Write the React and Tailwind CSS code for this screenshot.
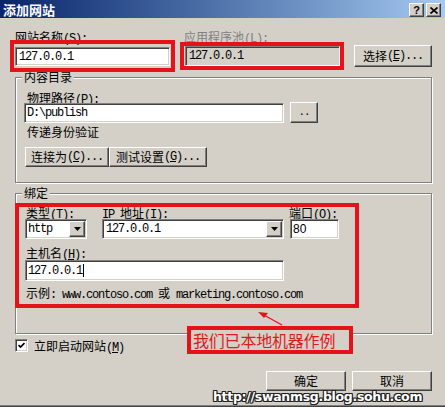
import React from "react";

const sunken =
  "border border-t-[#808080] border-l-[#808080] border-b-white border-r-white shadow-[inset_1px_1px_0_#404040,inset_-1px_-1px_0_#d4d0c8]";
const raised =
  "border border-t-white border-l-white border-b-[#404040] border-r-[#404040] shadow-[inset_-1px_-1px_0_#808080] bg-[#d4d0c8]";
const etched =
  "border border-[#808080] shadow-[1px_1px_0_#fff,inset_1px_1px_0_#fff]";
const mono = "font-['Liberation_Mono','Noto_Sans_CJK_SC',monospace] text-[12px] tracking-[-1.2px]";
const lbl = "h-[11px] leading-[11px] text-[12px] whitespace-nowrap";

function Acc({ k, colon = true, dots = false }) {
  return (
    <span className={mono}>
      (<span className="underline underline-offset-1">{k}</span>){colon ? ":" : ""}
      {dots ? "..." : ""}
    </span>
  );
}

function Btn({ children, className = "" }) {
  return (
    <div className={`${raised} flex items-center justify-center text-[12px] leading-none text-black whitespace-nowrap ${className}`}>
      {children}
    </div>
  );
}

function DropArrow() {
  return (
    <div className={`${raised} w-[16px] h-full flex items-center justify-center`}>
      <svg width="7" height="4" viewBox="0 0 7 4">
        <path d="M0 0H7L3.5 4Z" fill="#000" />
      </svg>
    </div>
  );
}

export default function App() {
  return (
    <div className="w-[445px] h-[407px] bg-[#d4d0c8] relative overflow-hidden flex flex-col font-['Noto_Sans_CJK_SC',sans-serif] text-black">
      {/* title bar */}
      <div className="h-[18px] flex items-center bg-gradient-to-r from-[#0a246a] to-[#a6caf0] pl-[3px] pr-[4px]">
        <span className="text-white font-bold text-[13px] leading-none">添加网站</span>
        <div className="ml-auto flex gap-[2px] mt-[2px]">
          <div className={`${raised} w-[15px] h-[14px] flex items-center justify-center text-[11px] font-bold leading-none font-['Liberation_Sans',sans-serif]`}>?</div>
          <div className={`${raised} w-[15px] h-[14px] flex items-center justify-center`}>
            <svg width="8" height="7" viewBox="0 0 8 7">
              <path d="M0.5 0.5L7.5 6.5M7.5 0.5L0.5 6.5" stroke="#000" strokeWidth="1.6" />
            </svg>
          </div>
        </div>
      </div>

      {/* row 1 */}
      <div className="flex mt-[13px] h-[36px]">
        <div className="ml-[15px] w-[155px] flex flex-col">
          <div className={lbl}>网站名称<Acc k="S" /></div>
          <div className={`${sunken} mt-[5px] h-[19px] bg-white flex items-center pl-[3px] ${mono}`}>127.0.0.1</div>
        </div>
        <div className="ml-[14px] w-[156px] flex flex-col">
          <div className={`${lbl} text-[#808080]`}>应用程序池<Acc k="L" /></div>
          <div className={`${sunken} mt-[4px] ml-[1px] h-[20px] flex items-center pl-[3px] ${mono}`}>127.0.0.1</div>
        </div>
        <Btn className="ml-[14px] mt-[14px] w-[78px] h-[22px]">
          选择<Acc k="E" colon={false} dots />
        </Btn>
      </div>

      {/* group 1 */}
      <div className={`${etched} ml-[15px] w-[417px] h-[106px] mt-[10px] flex flex-col`}>
        <div className={`${lbl} -mt-[7px] ml-[6px] px-[2px] bg-[#d4d0c8] self-start`}>内容目录</div>
        <div className={`${lbl} mt-[10px] ml-[11px]`}>物理路径<Acc k="P" /></div>
        <div className="flex items-start h-[20px]">
          <div className={`${sunken} ml-[8px] w-[260px] h-[20px] bg-white flex items-center pl-[2px] ${mono}`}>D:\publish</div>
          <Btn className="ml-[6px] -mt-[1px] w-[28px] h-[21px]">
            <span className="font-['Liberation_Mono',monospace] text-[11px] tracking-[-1px]">..</span>
          </Btn>
        </div>
        <div className={`${lbl} mt-[3px] ml-[11px]`}>传递身份验证</div>
        <div className="flex mt-[10px] ml-[9px]">
          <Btn className="w-[84px] h-[20px]">连接为<Acc k="C" colon={false} dots /></Btn>
          <Btn className="w-[98px] h-[20px]">测试设置<Acc k="G" colon={false} dots /></Btn>
        </div>
      </div>

      {/* group 2 */}
      <div className={`${etched} ml-[15px] w-[417px] h-[141px] mt-[10px] flex flex-col`}>
        <div className={`${lbl} -mt-[7px] ml-[6px] px-[2px] bg-[#d4d0c8] self-start`}>绑定</div>
        <div className="flex mt-[9px] ml-[10px]">
          <div className={`${lbl} w-[76px]`}>类型<Acc k="T" /></div>
          <div className={`${lbl} w-[187px]`}><span className={mono}>IP </span>地址<Acc k="I" /></div>
          <div className={lbl}>端口<Acc k="O" /></div>
        </div>
        <div className="flex mt-[1px] h-[20px] ml-[9px]">
          <div className={`${sunken} w-[62px] h-[20px] bg-white flex items-center pl-[2px] pr-[1px] py-[1px]`}>
            <span className={`${mono} flex-1`}>http</span>
            <DropArrow />
          </div>
          <div className={`${sunken} ml-[15px] w-[182px] h-[20px] bg-white flex items-center pl-[3px] pr-[1px] py-[1px]`}>
            <span className={`${mono} flex-1`}>127.0.0.1</span>
            <DropArrow />
          </div>
          <div className={`${sunken} ml-[6px] w-[49px] h-[20px] bg-white flex items-center pl-[2px] text-[12px] font-['Liberation_Sans',sans-serif]`}>80</div>
        </div>
        <div className={`${lbl} mt-[8px] ml-[10px]`}>主机名<Acc k="H" /></div>
        <div className={`${sunken} mt-[2px] ml-[9px] w-[259px] h-[21px] bg-white flex items-center pl-[2px] ${mono}`}>
          127.0.0.1<span className="inline-block w-[1px] h-[13px] bg-black ml-[1px]" />
        </div>
        <div className={`${lbl} mt-[6px] ml-[10px]`}>
          示例<span className={mono}>: www.contoso.com </span>或<span className={mono}> marketing.contoso.com</span>
        </div>
      </div>

      {/* checkbox */}
      <div className="flex items-center mt-[5px] ml-[15px]">
        <div className={`${sunken} w-[13px] h-[13px] bg-white flex items-center justify-center`}>
          <svg width="7" height="7" viewBox="0 0 7 7">
            <path d="M0.5 3L2.5 5L6.5 1" stroke="#000" strokeWidth="1.7" fill="none" />
          </svg>
        </div>
        <div className={`${lbl} ml-[6px] leading-[13px] h-[13px]`}>立即启动网站<Acc k="M" colon={false} /></div>
      </div>

      {/* buttons */}
      <div className="flex mt-[19px] ml-[266px]">
        <Btn className="w-[80px] h-[20px]">确定</Btn>
        <Btn className="w-[80px] h-[20px] ml-[6px]">取消</Btn>
      </div>

      <div className="mt-auto h-[2px] bg-[#808080] border-b border-[#404040]" />

      {/* annotations */}
      <div className="absolute left-[10px] top-[40px] w-[165px] h-[32px] border-[4px] border-[#e4121a]" />
      <div className="absolute left-[180px] top-[42px] w-[164px] h-[28px] border-[4px] border-[#e4121a]" />
      <div className="absolute left-[15px] top-[203px] w-[344px] h-[105px] border-[4px] border-[#e4121a]" />
      <svg className="absolute left-[250px] top-[306px]" width="40" height="24" viewBox="0 0 40 24">
        <path d="M32 19L12 8" stroke="#e4121a" strokeWidth="1.3" />
        <path d="M8 6L18 7L14 12Z" fill="#e4121a" />
      </svg>
      <div className="absolute left-[187px] top-[326px] w-[166px] h-[28px] border-[4px] border-[#e4121a] bg-[#d4d0c8] flex items-center pl-[2px]">
        <span className="text-[16px] leading-none text-[#dc1c1c] tracking-[-0.2px]">我们已本地机器作例</span>
      </div>

      {/* watermark */}
      <div className="absolute left-[213px] top-[390px] text-[12.5px] leading-[14px] font-bold text-white font-['DejaVu_Sans',sans-serif] tracking-[-0.3px] [text-shadow:1px_0_0_#222,-1px_0_0_#222,0_1px_0_#222,0_-1px_0_#222,1px_1px_0_#222,-1px_-1px_0_#222,1px_-1px_0_#222,-1px_1px_0_#222]">
        http://swanmsg.blog.sohu.com
      </div>
    </div>
  );
}
